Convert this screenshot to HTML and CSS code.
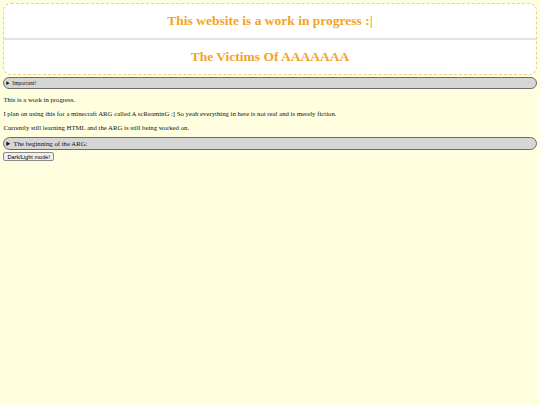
FILE: index.html
```html
<!DOCTYPE html>
<html lang="en">
<head>
    <meta charset="UTF-8">
    <meta name="viewport" content="width=device-width, initial-scale=1.0">
    <title>The Victims Of AAAAAAA</title>
    <link rel="stylesheet" href="styles.css">
</head>
<body>
    <header class="banner">
        <h1>This website is a work in progress :|</h1>
        <hr>
        <h1>The Victims Of AAAAAAA</h1>
    </header>

    <details class="small">
        <summary>Important!</summary>
    </details>

    <p>This is a work in progress.</p>
    <p>I plan on using this for a minecraft ARG called A scReaminG :] So yeah everything in here is not real and is merely fiction.</p>
    <p>Currently still learning HTML and the ARG is still being worked on.</p>

    <details>
        <summary>The beginning of the ARG:</summary>
    </details>

    <button id="modeBtn" type="button">Dark/Light mode!</button>

    <script>
        document.getElementById('modeBtn').addEventListener('click', function() {
            document.body.classList.toggle('dark');
        });
    </script>
</body>
</html>
```

FILE: styles.css
```css
body {
    margin: 3.4px;
    background-color: #ffffe0;
    color: #111;
    font-family: 'Liberation Serif', 'Times New Roman', serif;
    font-size: 6.75px;
}

body.dark {
    background-color: #222;
    color: #eee;
}

.banner {
    background-color: white;
    border: 1px dashed #f5cf73;
    border-radius: 8px;
    text-align: center;
    margin-bottom: 2px;
}

h1 {
    color: #f4a324;
    font-size: 13.5px;
    margin: 9px 0;
}

hr {
    border: none;
    height: 2px;
    background-color: #e3e3e3;
    margin: 0;
}

p {
    margin: 6.75px 0;
}

details summary {
    background-color: #d6d6d6;
    border: 1px solid #6b6b6b;
    border-radius: 7px;
    padding: 2px 2px;
    cursor: pointer;
}

details.small summary {
    font-size: 5.6px;
}

button {
    font-family: 'Liberation Sans', Arial, sans-serif;
    font-size: 5.6px;
    padding: 0.5px 3px;
    margin-top: 2px;
    background-color: #efefef;
    border: 1px solid #8a8a8a;
    border-radius: 2px;
}
```
